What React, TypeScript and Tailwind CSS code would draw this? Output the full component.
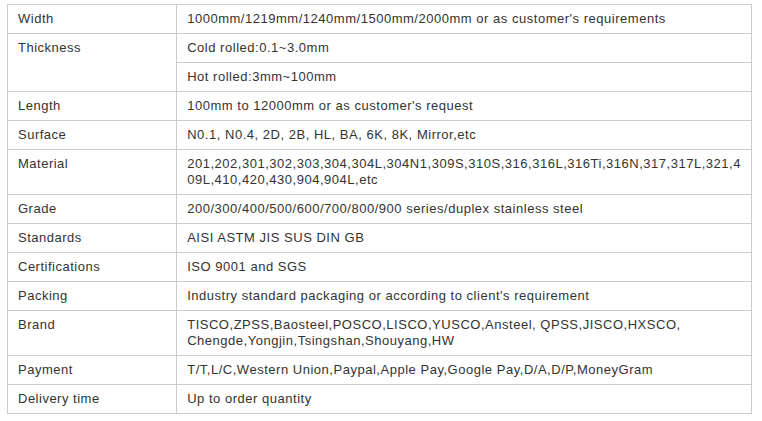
// Product spec table - stainless steel sheet parameters

const rows: { label: string; values: React.ReactNode[] }[] = [
  { label: "Width", values: ["1000mm/1219mm/1240mm/1500mm/2000mm or as customer's requirements"] },
  { label: "Thickness", values: ["Cold rolled:0.1~3.0mm", "Hot rolled:3mm~100mm"] },
  { label: "Length", values: ["100mm to 12000mm or as customer's request"] },
  { label: "Surface", values: ["N0.1, N0.4, 2D, 2B, HL, BA, 6K, 8K, Mirror,etc"] },
  {
    label: "Material",
    values: [
      <>
        201,202,301,302,303,304,304L,304N1,309S,310S,316,316L,316Ti,316N,317,317L,321,4
        <br />
        09L,410,420,430,904,904L,etc
      </>,
    ],
  },
  { label: "Grade", values: ["200/300/400/500/600/700/800/900 series/duplex stainless steel"] },
  { label: "Standards", values: ["AISI ASTM JIS SUS DIN GB"] },
  { label: "Certifications", values: ["ISO 9001 and SGS"] },
  { label: "Packing", values: ["Industry standard packaging or according to client's requirement"] },
  {
    label: "Brand",
    values: [
      <>
        TISCO,ZPSS,Baosteel,POSCO,LISCO,YUSCO,Ansteel, QPSS,JISCO,HXSCO,
        <br />
        Chengde,Yongjin,Tsingshan,Shouyang,HW
      </>,
    ],
  },
  { label: "Payment", values: ["T/T,L/C,Western Union,Paypal,Apple Pay,Google Pay,D/A,D/P,MoneyGram"] },
  { label: "Delivery time", values: ["Up to order quantity"] },
];

export default function App() {
  return (
    <div className="w-[762px] h-[421px] bg-white pt-1 pl-[7px] font-['Liberation_Sans',Arial,sans-serif] text-[13px] leading-[16px] text-[#333]">
      <table className="w-[745px] border-collapse border border-[#cccccc]">
        <tbody>
          {rows.map((row) =>
            row.values.map((v, i) => (
              <tr key={row.label + i}>
                {i === 0 && (
                  <td
                    rowSpan={row.values.length}
                    className="w-[170px] border border-[#cccccc] px-[10px] py-[6px] align-top tracking-[0.5px]"
                  >
                    {row.label}
                  </td>
                )}
                <td className="border border-[#cccccc] px-[10px] py-[6px] align-top whitespace-nowrap tracking-[0.52px]">
                  {v}
                </td>
              </tr>
            ))
          )}
        </tbody>
      </table>
    </div>
  );
}
